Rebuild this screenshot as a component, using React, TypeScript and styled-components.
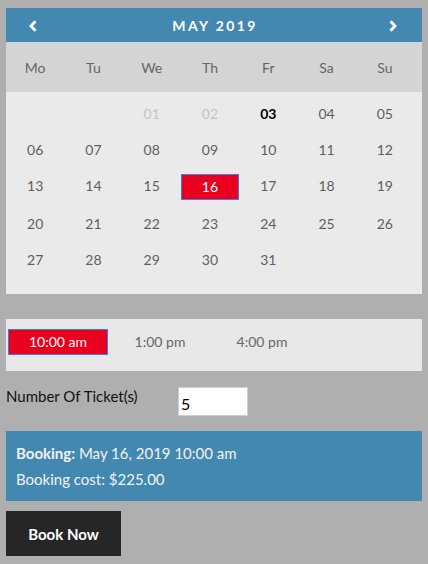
import styled, { createGlobalStyle } from "styled-components";

const GlobalStyle = createGlobalStyle`
  html, body {
    margin: 0;
    padding: 0;
    background: #afafaf;
  }
  body {
    font-family: Lato, "Liberation Sans", sans-serif;
  }
  * {
    box-sizing: border-box;
  }
`;

const Page = styled.div`
  padding: 8px 6px;
  width: 428px;
`;

const Calendar = styled.div`
  width: 416px;
`;

const Header = styled.div`
  height: 34px;
  background: #4288b1;
  display: grid;
  grid-template-columns: 1fr auto 1fr;
  align-items: center;
  color: #fff;
`;

const Title = styled.div`
  font-size: 14px;
  font-weight: 700;
  letter-spacing: 2.4px;
  padding-left: 2px;
`;

const Arrow = styled.button<{ $side: "left" | "right" }>`
  background: none;
  border: 0;
  padding: 0;
  display: flex;
  cursor: pointer;
  justify-self: ${(p) => (p.$side === "left" ? "start" : "end")};
  margin: ${(p) => (p.$side === "left" ? "1px 0 0 23px" : "1px 25px 0 0")};
`;

const WeekRow = styled.div`
  display: grid;
  grid-template-columns: repeat(7, 1fr);
  height: 50px;
  align-items: center;
  padding-right: 8px;
  background: #d4d4d4;
  color: #666;
  font-size: 14px;
  text-align: center;
`;

const DaysGrid = styled.div`
  display: grid;
  grid-template-columns: repeat(7, 1fr);
  padding: 4px 8px 16px 0;
  background: #eaeaea;
`;

const DayCell = styled.div`
  padding: 6px 0;
`;

const DayBox = styled.div<{ $state?: "off" | "today" | "selected" }>`
  height: ${(p) => (p.$state === "selected" ? 26 : 24)}px;
  line-height: 24px;
  text-align: center;
  font-size: 14px;
  color: ${(p) =>
    p.$state === "off" ? "#c3c3c3" : p.$state === "today" ? "#000" : p.$state === "selected" ? "#fff" : "#5f5f5f"};
  font-weight: ${(p) => (p.$state === "today" ? 700 : 400)};
  background: ${(p) => (p.$state === "selected" ? "#e8001e" : "transparent")};
  border: ${(p) => (p.$state === "selected" ? "1px solid #3b7ce8" : "0")};
`;

const Slots = styled.div`
  margin-top: 25px;
  width: 416px;
  background: #e8e8e8;
  padding: 10px 2px 16px;
  display: flex;
  gap: 2px;
`;

const Slot = styled.div<{ $active?: boolean }>`
  width: 100px;
  height: 26px;
  line-height: 24px;
  text-align: center;
  font-size: 14px;
  color: ${(p) => (p.$active ? "#fff" : "#666")};
  background: ${(p) => (p.$active ? "#e8001e" : "transparent")};
  border: 1px solid ${(p) => (p.$active ? "#3b7ce8" : "transparent")};
`;

const TicketRow = styled.div`
  display: flex;
  align-items: flex-start;
  margin-top: 16px;
`;

const Label = styled.label`
  width: 172px;
  font-size: 15px;
  color: #111;
  line-height: 18px;
`;

const Input = styled.input`
  width: 70px;
  height: 29px;
  border: 1px solid #cfcfcf;
  background: #fff;
  font-family: inherit;
  font-size: 16px;
  color: #000;
  padding: 4px 2px 0;
  outline: none;
`;

const Summary = styled.div`
  margin-top: 15px;
  width: 416px;
  height: 70px;
  background: #4288b1;
  color: #f2f2f2;
  font-size: 15px;
  padding: 9px 10px 0;
  line-height: 26px;
`;

const BookButton = styled.button`
  margin-top: 10px;
  width: 115px;
  height: 45px;
  background: #262626;
  color: #fff;
  border: 0;
  font-family: inherit;
  font-size: 15px;
  font-weight: 700;
  cursor: pointer;
`;

const Chevron = ({ dir }: { dir: "left" | "right" }) => (
  <svg width="8" height="12" viewBox="0 0 8 12">
    <path
      d={dir === "left" ? "M6.5 1.2 L2 6 L6.5 10.8" : "M1.5 1.2 L6 6 L1.5 10.8"}
      fill="none"
      stroke="#fff"
      strokeWidth="2.8"
    />
  </svg>
);

const weekdays = ["Mo", "Tu", "We", "Th", "Fr", "Sa", "Su"];

type Day = { n: string; state?: "off" | "today" | "selected" } | null;

const days: Day[] = [null, null];
for (let d = 1; d <= 31; d++) {
  const n = d < 10 ? `0${d}` : `${d}`;
  days.push({
    n,
    state: d < 3 ? "off" : d === 3 ? "today" : d === 16 ? "selected" : undefined,
  });
}

const slots = ["10:00 am", "1:00 pm", "4:00 pm"];

const App = () => {
  return (
    <Page>
      <GlobalStyle />
      <Calendar>
        <Header>
          <Arrow $side="left" aria-label="previous">
            <Chevron dir="left" />
          </Arrow>
          <Title>MAY 2019</Title>
          <Arrow $side="right" aria-label="next">
            <Chevron dir="right" />
          </Arrow>
        </Header>
        <WeekRow>
          {weekdays.map((w) => (
            <div key={w}>{w}</div>
          ))}
        </WeekRow>
        <DaysGrid>
          {days.map((d, i) => (
            <DayCell key={i}>{d && <DayBox $state={d.state}>{d.n}</DayBox>}</DayCell>
          ))}
        </DaysGrid>
      </Calendar>
      <Slots>
        {slots.map((s, i) => (
          <Slot key={s} $active={i === 0}>
            {s}
          </Slot>
        ))}
      </Slots>
      <TicketRow>
        <Label htmlFor="tickets">Number Of Ticket(s)</Label>
        <Input id="tickets" defaultValue="5" />
      </TicketRow>
      <Summary>
        <div>
          <b>Booking:</b> May 16, 2019 10:00 am
        </div>
        <div>Booking cost: $225.00</div>
      </Summary>
      <BookButton>Book Now</BookButton>
    </Page>
  );
};

export default App;
